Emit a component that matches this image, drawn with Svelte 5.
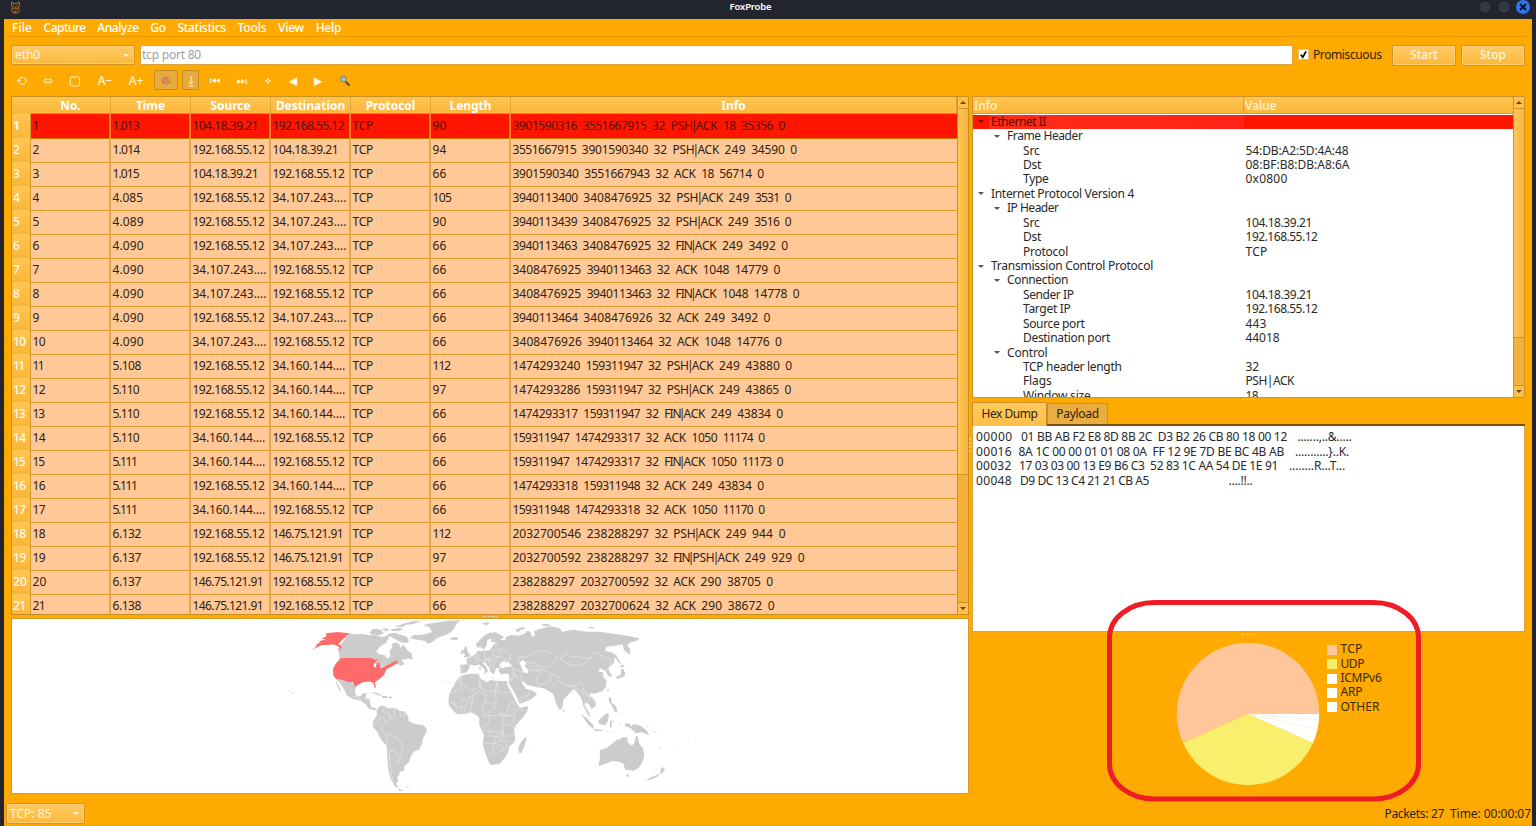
<script>
  const menu = [['File', 20], ['Capture', 42], ['Analyze', 41.5], ['Go', 15.5], ['Statistics', 48.5], ['Tools', 29], ['View', 26], ['Help', 25.5]];
  const heads = ['No.', 'Time', 'Source', 'Destination', 'Protocol', 'Length', 'Info'];
  const L = '192.168.55.12';
  const A = '104.18.39.21';
  const B = '34.107.243....';
  const C = '34.160.144....';
  const D = '146.75.121.91';
  const rows = [
    ['1.013', A, L, '90', '3901590316 3551667915 32 PSH|ACK 18 35356 0'],
    ['1.014', L, A, '94', '3551667915 3901590340 32 PSH|ACK 249 34590 0'],
    ['1.015', A, L, '66', '3901590340 3551667943 32 ACK 18 56714 0'],
    ['4.085', L, B, '105', '3940113400 3408476925 32 PSH|ACK 249 3531 0'],
    ['4.089', L, B, '90', '3940113439 3408476925 32 PSH|ACK 249 3516 0'],
    ['4.090', L, B, '66', '3940113463 3408476925 32 FIN|ACK 249 3492 0'],
    ['4.090', B, L, '66', '3408476925 3940113463 32 ACK 1048 14779 0'],
    ['4.090', B, L, '66', '3408476925 3940113463 32 FIN|ACK 1048 14778 0'],
    ['4.090', L, B, '66', '3940113464 3408476926 32 ACK 249 3492 0'],
    ['4.090', B, L, '66', '3408476926 3940113464 32 ACK 1048 14776 0'],
    ['5.108', L, C, '112', '1474293240 159311947 32 PSH|ACK 249 43880 0'],
    ['5.110', L, C, '97', '1474293286 159311947 32 PSH|ACK 249 43865 0'],
    ['5.110', L, C, '66', '1474293317 159311947 32 FIN|ACK 249 43834 0'],
    ['5.110', C, L, '66', '159311947 1474293317 32 ACK 1050 11174 0'],
    ['5.111', C, L, '66', '159311947 1474293317 32 FIN|ACK 1050 11173 0'],
    ['5.111', L, C, '66', '1474293318 159311948 32 ACK 249 43834 0'],
    ['5.111', C, L, '66', '159311948 1474293318 32 ACK 1050 11170 0'],
    ['6.132', L, D, '112', '2032700546 238288297 32 PSH|ACK 249 944 0'],
    ['6.137', L, D, '97', '2032700592 238288297 32 FIN|PSH|ACK 249 929 0'],
    ['6.137', D, L, '66', '238288297 2032700592 32 ACK 290 38705 0'],
    ['6.138', D, L, '66', '238288297 2032700624 32 ACK 290 38672 0']
  ].map((r, i) => [String(i + 1), r[0], r[1], r[2], 'TCP', r[3], r[4]]);

  const tree = [
    [0, 'Ethernet II', 55], [1, 'Frame Header', 75.5], [2, 'Src', 16.5, '54:DB:A2:5D:4A:48', 103], [2, 'Dst', 18, '08:BF:B8:DB:A8:6A', 104], [2, 'Type', 25.5, '0x0800', 42],
    [0, 'Internet Protocol Version 4', 143], [1, 'IP Header', 51.5], [2, 'Src', 16.5, A, 66.5], [2, 'Dst', 18, L, 72], [2, 'Protocol', 45, 'TCP', 22],
    [0, 'Transmission Control Protocol', 162], [1, 'Connection', 61], [2, 'Sender IP', 50.5, A, 66.5], [2, 'Target IP', 47.5, L, 72],
    [2, 'Source port', 61.5, '443', 21], [2, 'Destination port', 87, '44018', 34], [1, 'Control', 40.5],
    [2, 'TCP header length', 98.5, '32', 13.5], [2, 'Flags', 28.5, 'PSH|ACK', 48.5], [2, 'Window size', 67.5, '18', 12.5]
  ];
  const hex = [
    ['00000', 36.5, 8.5, '01 BB AB F2 E8 8D 8B 2C  D3 B2 26 CB 80 18 00 12', 266, 10.5, '.......,..&.....', 54],
    ['00016', 36, 6.5, '8A 1C 00 00 01 01 08 0A  FF 12 9E 7D BE BC 4B AB', 265.5, 11, '...........}..K.', 54],
    ['00032', 35.5, 7.5, '17 03 03 00 13 E9 B6 C3  52 83 1C AA 54 DE 1E 91', 259, 11, '........R...T...', 56],
    ['00048', 36, 8, 'D9 DC 13 C4 21 21 CB A5', 129, 79.5, '....!!..', 24]
  ];
  const legend = [['TCP', '#ffc799', 22], ['UDP', '#f9ef6c', 23.5], ['ICMPv6', '#fff', 41], ['ARP', '#fff', 22], ['OTHER', '#fff', 39]];

  function spacing(text) {
    let d = text.endsWith('....') ? 2.2 : 0;
    const address = text.includes('.');
    for (const c of text) {
      if (c === '1') d -= address ? 2 : 1.5;
      else if (c === '3' || c === '5') d -= 0.6;
      else if (c >= '0' && c <= '9') d += 0.15;
      else if (c === 'I' || c === 'N') d -= 1.5;
      else if (c >= 'A' && c <= 'Z') d -= 0.25;
    }
    return (d / text.length).toFixed(3);
  }
  function fit(node, width) {
    const natural = node.getBoundingClientRect().width;
    node.style.letterSpacing = `${(width - natural) / node.textContent.length}px`;
  }
</script>

<div class="screen">
  <header class="titlebar">
    <svg class="fox" width="11" height="13" viewBox="0 0 11 13"><path d="M1.5 4V1l2.2 1.5h3.2L9.3 1v3.2L8.4 6.5 5.5 8 2.5 6.5zM2.5 7l-1 2.5L3 12h5l1.5-2.3L8.5 7M3.2 4.2l1.4.8M7.6 4.2l-1.3.8M4.8 6.3h1.5M3.5 9.5l2 1 2-1M5.5 10.5V12" fill="none" stroke="#bd7b26" stroke-width=".9" /></svg>
    <b use:fit={42}>FoxProbe</b>
    <div class="wins"><i></i><i></i><i class="close"><svg width="14" height="14" viewBox="0 0 14 14"><path d="M4 4l6 6M10 4l-6 6" stroke="#10141f" stroke-width="2" /></svg></i></div>
  </header>

  <div class="window">
    <nav>
      {#each menu as [label, w]}<span class="mi" style="width:{w}px"><span use:fit={w}>{label}</span></span>{/each}
    </nav>

    <div class="capture">
      <div class="combo"><span use:fit={25}>eth0</span><i class="down"></i></div>
      <div class="filter"><span use:fit={59}>tcp port 80</span></div>
      <div class="check"><svg width="9" height="9" viewBox="0 0 10 10"><path d="M2 5.2l2.2 2.8L7.8 1.6" fill="none" stroke="#000" stroke-width="1.9" /></svg></div>
      <span class="prom"><span use:fit={68.5}>Promiscuous</span></span>
      <div class="btn">Start</div>
      <div class="btn">Stop</div>
    </div>

    <div class="tools">
      <div style="width:26px"><svg width="12" height="12" viewBox="0 0 12 12"><path d="M1 5.800h3.600M2.800 4l-1.800 1.800M2.800 5.900a3.600 3.600 0 1 1 1.200 2.700M3.300 3.800A3.600 3.600 0 0 1 6.300 2.400M4.500 5.500L2.700 7.300" /></svg></div>
      <div style="width:26px"><svg width="12" height="12" viewBox="0 0 12 12"><path d="M3 4.700h6M3 7.300h6M4.500 3L1.600 6l2.900 3M7.500 3l2.900 3-2.900 3" /></svg></div>
      <div style="width:28px"><svg width="12" height="12" viewBox="0 0 12 12"><rect x="1.300" y="2" width="9.200" height="9" rx="1.500" /></svg></div>
      <div style="width:32px"><span use:fit={14.5}>A−</span></div>
      <div style="width:30px"><span use:fit={14.5}>A+</span></div>
      <div class="on" style="width:24px;margin-left:3px"><svg width="12" height="12" viewBox="0 0 12 12"><path d="M5 1.500C2 1.500.8 4 1.200 6.500 1.700 9.500 4.500 10.800 7.500 10.200c1.200-.3.2-1.800 1-2.600.8-.7 2.500 0 2.200-1.700C10.200 3 8 1.500 5 1.500z" fill="#e0905c" stroke="none" /><circle cx="3.400" cy="4" r=".9" fill="#7f92a8" stroke="none" /><circle cx="6.300" cy="3.200" r="1" fill="#ea5a3a" stroke="none" /><circle cx="3.300" cy="7" r="1" fill="#e0503f" stroke="none" /><circle cx="6" cy="8.700" r=".8" fill="#6aa0c0" stroke="none" /><path d="M7 5.500l3 3.200" stroke="#b86a48" /></svg></div>
      <div class="on" style="width:17px;margin-left:4px"><svg width="10" height="12" viewBox="0 0 10 12"><path d="M5 1v8M2.700 6.700L5 9l2.300-2.300M2.500 11h5" /></svg></div>
      <div style="width:24px;margin-left:4px"><svg class="solid" width="12" height="12" viewBox="0 0 12 12"><path d="M1 3h1.200v5H1zM6.800 3v5L2.600 5.500zM11 3v5L6.800 5.500z" /></svg></div>
      <div style="width:30px"><svg class="solid" width="12" height="12" viewBox="0 0 12 12"><path d="M1 4v5l4.200-2.500zM5.200 4v5l4.200-2.500zM9.600 4h1.200v5H9.600z" /></svg></div>
      <div style="width:21px"><svg width="10" height="12" viewBox="0 0 10 12"><circle cx="5" cy="6" r="1.500" /><path d="M5 3v2M5 7v2M2 6h2M6 6h2" /></svg></div>
      <div style="width:24px;margin-left:3px"><svg class="solid" width="10" height="12" viewBox="0 0 10 12"><path d="M9.200 2.300v9L.6 6.800z" /></svg></div>
      <div style="width:26px"><svg class="solid" width="10" height="12" viewBox="0 0 10 12"><path d="M.8 2.300v9l8.600-4.500z" /></svg></div>
      <div style="width:24px;margin-left:2px"><svg width="12" height="12" viewBox="0 0 12 12"><path d="M6.600 6.600l4 4" stroke="#454a50" stroke-width="2" /><circle cx="4.400" cy="4.200" r="2.900" fill="#94c3c7" stroke="#827f62" stroke-width="1" /></svg></div>
    </div>

    <main>
      <section class="left">
        <div class="packets">
          <div class="grid">
            <div class="row head"><span class="rh"></span>{#each heads as h}<b>{h}</b>{/each}</div>
            {#each rows as r, i}
              <div class="row" class:sel={i === 0}>
                <span class="rh" class:bold={i === 0}><span style="letter-spacing:{spacing(r[0])}px">{r[0]}</span></span>
                {#each r as c}<span class="cell">{#each c.split(' ') as word}<span class="word">{#each word.split('|') as part, k}{#if k > 0}<i class="bar">|</i>{/if}<span style="letter-spacing:{spacing(part)}px">{part}</span>{/each}</span>{/each}</span>{/each}
              </div>
            {/each}
          </div>
          <div class="scroll"><i class="up"></i><div class="thumb" style="height:367px"></div><div class="track"></div><i class="dn"></i></div>
        </div>
        <div class="hsplit"><i></i></div>
        <div class="map">
          <svg width="955" height="174" viewBox="0 0 955 174">
            <g class="land" transform="translate(268 -4) scale(.33333)">
              <path d="M207 55l20 3 18-2 22 5 25 0 14 6 16-4 4 8-9 13-19 12-9 14 8 8 17 3 10 11 7-10-2-14 9-13-4-7 13-6 11 5 3 12 9-10 13 17 13 10 0 9-16 7-20 3 9 6 6 6-15 6-3-5-18 1-20 11-7-6-12 3-13-9-8-6H186l-7-8-2-19-4-13z" />
              <path d="M352 76l-20-11-16 2 11-11 15-3 14 5 22 6 9 12-4 7-13 0-11-3zM268 55l10-13 15 0 12 4 6 8-10 6-22-1zM305 43l13-3 11 4-8 5zM333 43l22-4 17 3-15 6-22 0zM342 35l29-9 25-7 29-2-22 9-26 4-10 6zM384 124l10 2 7 6-14 1zM356 134l13 2-8 6-8-1z" />
              <path d="M389 70L400 60 430 59 456 51 448 37 430 30 455 25 500 18 540 16 529 28 522 42 510 54 490 62 472 68 456 82 444 86 434 78zM512 68l15-2 10 4-8 5-17-1z" />
              <path d="M556 94l5 3-2 8 8 12 4 4-6 4-14 2 5-6-5-8zM546 106l7 0-3 9-8 1z" />
              <path d="M168 192L188 196 205 202 216 200 228 216 224 230 229 243 241 244 249 235 260 235 255 250 269 253 270 265 275 278 284 278 290 284 282 286 267 281 257 268 240 256 220 253 200 241 194 226 182 206zM167 194l9 19 7 15-3 1-9-16zM271 230l19 3 15 8-4 2-20-8zM306 242l15 1 3 5-14 2-4-3z" />
              <path d="M290 284L300 274 312 272 323 280 346 280 361 288 374 289 385 306 386 319 402 326 430 331 440 341 439 353 428 371 427 385 418 403 401 410 392 425 388 440 378 450 372 454 374 466 360 470 358 480 352 486 354 498 348 506 356 518 346 516 334 496 326 472 323 442 320 392 306 378 288 346 277 332 280 317 290 303z" />
              <path d="M356 520l14 7-13 0zM379 514l10 1-7 3z" />
              <path d="M277 332l21-20 12-2 12 9 -18 14 5 16 13 12 7-3 18 7 18 19 4 16-8 20-3 20-13 4M316 275l-9 14 9 7 13 0 3 15-9 6M346 280l-5 9 5 16-14 4M360 288l0 16 12-1M373 289l0 14M322 361l-2 31M331 407l13 2 9 13M327 407l2 27 4 38 9 38M219 245l14-1 13 15" class="border" />
            </g>
            <g class="usa" transform="translate(268 -4) scale(.33333)">
              <path d="M139 55l33-4 36 4-33 32 10 8-2 10-6-10-18-7-12 2-20 0-29 13 12-10-2-4 11-6-1-4 19-6-14-3 15-5z" />
              <path d="M183 129H275L283 134 295 133 283 144 280 154 286 158 291 145 298 141 300 156 304 159 322 151 350 136 353 143 336 154 319 163 312 180 302 188 294 196 284 202 288 216 284 219 280 204 272 200 262 200 248 202 236 208 226 217 218 200 205 202 188 196 168 191 160 182 159 162 166 148 178 134z" />
              <path d="M35 233l5 1-1 3zM27 226l4 2-2 1zM329 246h5v3h-5zM97 104l6-2-3 3z" />
            </g>
            <g class="land" transform="translate(428 -4) scale(.33333)">
              <path d="M66 181L92 176 116 176 120 190 134 197 142 202 150 195 175 198 200 198 203 212 218 240 232 268 240 278 265 273 262 288 248 308 228 330 222 345 226 372 220 385 208 394 204 412 192 432 178 447 152 450 146 440 136 415 128 388 132 360 118 330 118 308 104 296 90 292 75 297 52 298 40 288 28 272 25 262 28 235 40 215 50 195z" />
              <path d="M112 98L108 88 118 76 132 62 148 53 165 52 178 58 192 66 180 74 195 76 198 66 215 60 235 62 255 56 262 48 272 50 275 64 285 64 282 48 300 42 330 34 360 40 365 50 400 44 440 50 480 50 530 58 570 64 598 70 590 78 572 82 562 90 571 105 570 120 552 105 548 88 525 92 498 96 496 108 515 112 524 125 522 145 505 160 508 172 518 182 508 186 496 168 480 160 476 170 490 172 488 182 500 198 498 215 488 228 465 236 452 234 450 242 466 258 468 272 455 282 446 268 436 262 434 272 446 290 452 308 444 300 430 272 424 250 415 236 402 222 388 235 370 255 368 275 360 286 350 270 340 238 325 228 312 220 290 217 262 210 248 198 246 204 258 222 275 225 292 236 275 252 248 264 238 266 226 238 207 205 207 178 196 176 182 178 176 168 180 160 168 160 162 178 152 172 148 158 134 142 128 144 140 158 144 168 138 176 132 162 118 148 104 152 90 148 88 160 80 172 62 176 60 150 82 148 78 132 92 126 108 116 112 108 124 108 150 106 158 94 162 88 176 84 154 82 152 70 142 76 140 90 132 104 122 96z" />
              <path d="M236 395l7-13 13-15 4 4-8 25-8 18-8-1zM368 281l6 6-3 6zM422 297l18 12 20 22 2 10-16-10zM460 341l17 3 16 3-10 2-19-2zM474 319l12-12 15-14 6 5-4 23-8 10-16-3zM510 318l12-2-8 7 2 12-6 4zM555 324l14 2 4 8 9-7 21 6 16 13 9 15-15-6-9-3-16 3-17-16-15-5zM507 245l6 3 2 15 13 11 5 19-9-3-10-21-8-11zM501 224l6-2-2 9z" />
              <path d="M475 451L480 432 479 405 500 399 516 386 530 374 542 372 548 366 564 368 562 381 576 392 584 382 588 363 593 364 598 386 610 402 613 420 609 438 596 458 582 467 556 464 550 446 536 440 518 438 502 444 480 452zM560 478l9 2-5 7-6-4zM666 455l10 10-10 9-3 4-3-6zM619 494l23-11 19-7-9 9-22 11zM518 114l10 6 16 26-5-1-18-22zM543 148l10 5-2 4-10-2zM528 186l14-7 2-19 5 1 7 14-4 10-21 7zM75 93l7 6-2 6 8 12 3 6-6 4-14 0 5-6-5-8zM65 106l6 0-3 10-7 0z" />
              <path d="M118 150l3 8M128 174l8 3M229 43l18-6 11 3-17 6-5 6-8-3zM304 28l20-2 9 6-22 2zM124 26l16-4 10 2-11 7zM130 172l8 4-5 2zM445 36l17 0 0 4-16 0zM118 154l4 0 0 12-4 0z" />
              <path d="M616 330l12 9M636 346l15 8M655 393l10 12M708 387l4 2M744 370l4 2M284 397l3 1M14 200l5 1M25 202l6 2M156 190l8 0M520 286l4-6M528 348l-8 3M498 350l8 0M540 322l2 8" class="islands" />
              <path d="M238 142L250 135 259 146 254 152 265 165 263 175 250 172 244 156zM178 156L181 144 190 138 198 142 206 140 210 146 218 154 200 156 186 160z" class="water" />
              <path d="M181 99l17 10 14 12-3 15-18 3M233 142l4-17 24 2 17-15 31-4 21 4 22 18-10 12-14 14-28 0-20-14-14 3-9-7M360 129l18-12 18 9 20-3 20 8 19-5M455 126l-11 13-24 13-28-2-28-14-4-7M455 126l2-14 14 2 24 13 17 7-2 22-13 12M232 190l-12-17-1-15M245 170l21-6 27 5 10 5M269 150l22 14 29 3 9 14 5-3 19 5 5 16 24 13 25 0 11-8 11 4 0 15 8 14M240 180l6 18M292 180l-2 22 12 17M335 184l-12 19-22 6M353 197l-15 18M377 208l15 9 12-2M403 212l0 19M404 229l11-10M419 225l13 16M435 237l10 4 5 14-10 10M444 238l14 10 5 18M112 113l4 20 14 5 12-9 16 5 17-7M133 113l1 19 8 5M158 103l3 18-16 12M101 120l11 16-9 10M130 138l15-4 16 8 12-4M145 137l3 12M157 73l5 13M148 152l12 4 4-12M160 122l22 4 18 10M160 104l18 2 4 16M66 152l-2 22M84 149l12 2M217 172l-1 20-9 2M220 171l17 20M217 192l-7 11M244 262l-6-12 26-8 8-16M218 160l14 6 12 4" class="border" />
              <path d="M60 184l-9 16-17 8M62 180l0 43-32 12M62 203l33 27 25-17-3-22M120 200l3 21 15 8 27-1 7-32M172 200l1 33h45M138 229l-3 28-9 25 6 16M98 240l22-11 15 13M98 240l-15 18-4 18-29 0-10-9M64 252l17 5M52 276l-1 21M65 274l0 22M75 276l0 22M98 242l-3 27-6 22M166 231l3 32-8 15 15 15 24 8 4-25 11-17M132 264l32-1M133 300l18-11 11-9M128 305l21-3-4 23-16 15M150 302l37-2 0 27 0 22-14 6-19-7-6 2M187 300l16 3 16-2M190 326l23 6 12 9M132 346l14 1 3 15 16 3 1 20h-35M166 365l17-1 6-14M190 348l0 17-13 14-12 9M195 364l16-2 11-7M160 386l-2 30-14-1M158 407l21-20 11 17-21 13M180 378l15 0 6 15-10 11M208 276l18 10-5 22 0 17M215 258l12 19 23 12M28 262h14l4 10" class="border" />
            </g>
          </svg>
        </div>
      </section>
      <div class="vsplit"><i></i></div>
      <section class="right">
        <div class="tree">
          <div class="tbody">
            <div class="thead"><span>Info</span><span>Value</span></div>
            {#each tree as [level, label, w, value, vw], i}
              <div class="trow" class:sel={i === 0}>
                <div class="tname" style="padding-left:{level * 16 + 2}px">
                  <i class="arrow" class:none={level === 2}></i><span use:fit={w}>{label}</span>
                </div>
                <div class="tval">{#if value}<span use:fit={vw}>{value}</span>{/if}</div>
              </div>
            {/each}
          </div>
          <div class="scroll"><i class="up"></i><div class="thumb" style="height:230px"></div><div class="track"></div><i class="dn"></i></div>
        </div>
        <div class="tabs"><div class="tab active"><span use:fit={56}>Hex Dump</span></div><div class="tab"><span use:fit={42.5}>Payload</span></div><div class="grip"></div></div>
        <div class="hex">
          {#each hex as [off, ow, g1, bytes, bw, g2, txt, tw]}
            <div class="hrow"><span use:fit={ow}>{off}</span><span style="margin-left:{g1}px" use:fit={bw}>{bytes}</span><span style="margin-left:{g2}px" use:fit={tw}>{txt}</span></div>
          {/each}
        </div>
        <div class="chart">
          <div class="grip"></div>
          <svg class="pie" width="144" height="144" viewBox="-72 -72 144 144">
            <path d="M0 0H71.200A71.200 71.200 0 1 0 -65 29z" fill="#ffc799" />
            <path d="M0 0L-65 29A71.200 71.200 0 0 0 65 29z" fill="#f9ef6c" />
            <path d="M0 0L65 29A71.200 71.200 0 0 0 71.200 0z" fill="#fff" />
            <path d="M0 0L71 6M0 0L69.500 15" stroke="#ffe9c6" stroke-width=".8" stroke-dasharray="4 2" />
          </svg>
          <div class="legend">
            {#each legend as [name, color, w]}<div><i style="background:{color}"></i><span use:fit={w}>{name}</span></div>{/each}
          </div>
          <svg class="mark" width="314" height="202" viewBox="0 0 314 202"><rect x="2.500" y="2.500" width="309" height="196.500" rx="45" ry="35" fill="none" stroke="#ee1c25" stroke-width="5" /></svg>
        </div>
      </section>
    </main>

    <footer>
      <div class="combo small"><span use:fit={41.5}>TCP: 85</span><i class="down"></i></div>
      <div class="stat"><span use:fit={59.5}>Packets: 27</span><span use:fit={81}>Time: 00:00:07</span></div>
    </footer>
  </div>
</div>

<style>
  :global(body) { background: #fff; overflow: hidden; }
  .screen, .screen :global(*) { box-sizing: border-box; }
  .screen { width: 1536px; height: 826px; background: #22242e; font: 12px/14px "Noto Sans", sans-serif; color: #2e2410; overflow: hidden; display: flex; flex-direction: column; }
  span, b { flex: none; white-space: pre; }
  i { font-style: normal; }
  .titlebar { height: 19px; flex: none; display: grid; grid-template-columns: 1fr auto 1fr; align-items: start; color: #fff; font-size: 9.5px; padding-right: 6px; padding-left: 10px; }
  .titlebar b { line-height: 14px; margin-left: -38px; margin-right: 1px; font-weight: 600; }
  .fox { margin-top: 1px; }
  .wins { display: flex; justify-content: flex-end; gap: 5px; }
  .wins i { width: 14px; height: 14px; border-radius: 50%; background: #343844; border: 1px solid #171920; }
  .wins .close { background: #2b76f6; border: 0; }
  .wins svg { display: block; }
  .window { flex: 1; margin: 0 4px; background: #fa0; display: flex; flex-direction: column; min-height: 0; border-bottom: 1px solid #eda006; }
  nav { height: 18px; flex: none; border-bottom: 1px solid #eb9c00; display: flex; gap: 11.6px; padding-left: 8px; align-items: center; color: #fff; font-weight: 500; }
  .mi { display: block; }
  .capture { height: 20px; flex: none; margin: 8px 7px 0; display: flex; align-items: center; }
  .combo, .btn { background: linear-gradient(#ffca66, #fbb93c); border: 1px solid #d2952a; border-radius: 2px; color: #fff5df; box-shadow: inset 0 0 0 1px #ffce76; }
  .combo { width: 124px; height: 20px; display: flex; align-items: center; justify-content: space-between; padding: 0 5px 0 3px; margin-right: 5px; }
  .down { border: 3px solid transparent; border-top-color: #fff0cf; border-bottom: 0; }
  .filter { width: 1153px; height: 20px; background: #fff; border: 1px solid #d9a343; border-radius: 2px; color: #a0a0a0; padding: 2px 1px; margin-right: 5px; display: flex; }
  .check { width: 11px; height: 11px; background: #fff; border: 1px solid #e0c188; margin: 0 4px 1px 0; display: flex; }
  .prom { width: 79px; }
  .btn { width: 64px; height: 21px; text-align: center; line-height: 18px; font-weight: 500; }
  .btn + .btn { margin-left: 5px; }
  .tools { height: 20px; flex: none; margin: 5px 5px 6px; display: flex; color: #fff3d8; font-weight: 500; }
  .tools div { display: flex; align-items: center; justify-content: center; flex: none; padding-top: 1px; }
  .tools svg { fill: none; stroke: #fff3d8; stroke-width: 1; }
  .tools svg.solid { fill: #fff7e5; stroke: none; }
  .tools .on { background: #e5ab3b; border: 1px solid #c18a2a; border-radius: 2px; }
  main { flex: none; height: 698px; margin: 0 7px; display: flex; }
  .left { width: 958px; flex: none; display: flex; flex-direction: column; }
  .packets { height: 519px; display: flex; border: 1px solid #c88e1f; overflow: hidden; }
  .grid { width: 945px; overflow: hidden; }
  .row { display: grid; grid-template-columns: 19px repeat(6, 80px) 446px; height: 24px; background: #ffc896; }
  .row.head { height: 17px; color: #fff; background: linear-gradient(#ffc552, #fab63a); border-bottom: 1px solid #d49722; }
  .head b { text-align: center; line-height: 17px; border-right: 1px solid #dba335; font-weight: 700; font-size: 11.9px; }
  .rh { background: linear-gradient(#ffc552, #fab63a); color: #fffaf0; font-weight: 500; line-height: 24px; padding-left: 1px; border-right: 1px solid #d49a2c; border-bottom: 1px solid #d59c2c; }
  .rh.bold { font-weight: 700; }
  .head .rh { border: 0; }
  .cell { line-height: 23px; padding-left: 1.5px; border-right: 2px solid #e3a845; border-bottom: 1px solid #d99c2c; overflow: hidden; display: flex; gap: 5.5px; }
  .cell:last-child { border-right: 0; }
  .word { display: flex; }
  .bar { margin: 0 -1.8px; }
  .row.sel { background: #ff1500; color: #541200; }
  .row.sel .cell { border-bottom-color: #c87200; border-right-color: #e08522; }
  .scroll { width: 11px; flex: none; background: #f5b03a; border-left: 1px solid #cf9228; display: flex; flex-direction: column; }
  .scroll i { height: 11px; flex: none; background: #ffc04b; display: grid; place-items: center; }
  .scroll i::after { content: ''; border: 3px solid transparent; }
  .scroll .up::after { border-bottom-color: #63491b; border-top: 0; }
  .scroll .dn::after { border-top-color: #63491b; border-bottom: 0; }
  .thumb { flex: none; background: linear-gradient(90deg, #ffc755, #f7b53d); border-top: 1px solid #cf9228; border-bottom: 1px solid #cf9228; }
  .track { flex: 1; border-bottom: 1px solid #cf9228; }
  .hsplit { height: 3px; display: flex; justify-content: center; align-items: center; }
  .hsplit i, .grip { width: 14px; height: 1px; border-top: 1px dotted #ffdfa0; }
  .map { height: 176px; background: #fff; border: 1px solid #d49a2f; overflow: hidden; }
  .map svg { display: block; }
  .land path { fill: #ccc; }
  .land .border { fill: none; stroke: #ececec; stroke-width: 1.8; }
  .land .islands { fill: none; stroke: #d8d8d8; stroke-width: 2; }
  .land .water { fill: #fff; }
  .usa path { fill: #ff6b6b; }
  .vsplit { width: 3px; display: flex; align-items: center; padding-bottom: 1px; }
  .vsplit i { height: 14px; border-left: 2px dotted #ffc95f; }
  .right { width: 553px; flex: none; display: flex; flex-direction: column; }
  .tree { height: 302px; background: #fff; border: 1px solid #d0952a; display: flex; overflow: hidden; }
  .tbody { width: 540px; overflow: hidden; }
  .thead { display: grid; grid-template-columns: 271px 1fr; height: 17px; margin-bottom: .6px; background: linear-gradient(#ffc552, #fab63a); border-bottom: 1px solid #dca02e; color: #fff5df; line-height: 17px; font-weight: 500; }
  .thead span { padding-left: 1px; border-right: 1px solid #dba335; }
  .thead span:last-child { border: 0; }
  .trow { display: grid; grid-template-columns: 271px 1fr; height: 14.43px; align-items: center; color: #292929; }
  .tname { display: flex; align-items: center; height: 100%; line-height: 14px; }
  .tval { padding-left: 1.5px; display: flex; }
  .trow.sel { background: #ff1500; color: #5b0a00; }
  .trow.sel .tname { background: linear-gradient(90deg, transparent 16px, #ff2c18 16px, #ff2415); }
  .arrow { width: 6px; border: 3px solid transparent; border-top-color: #555; border-bottom: 0; margin: 0 7px 0 3px; flex: none; }
  .sel .arrow { border-top-color: #6b1508; }
  .arrow.none { border-color: transparent; }
  .tabs { height: 28px; flex: none; display: flex; align-items: flex-end; position: relative; border-bottom: 2px solid #765016; }
  .tabs .grip { position: absolute; left: 270px; top: 1px; }
  .tab { height: 21px; width: 61px; line-height: 20px; text-align: center; background: #e9ad40; border: 1px solid #c68f2b; border-bottom: 0; }
  .tab.active { height: 24px; width: 75px; line-height: 21px; background: linear-gradient(#ffc95e, #ffbf4a); margin-bottom: -2px; }
  .hex { height: 206px; flex: none; background: #fff; border: 1px solid #d9a34a; border-top: 0; padding: 4.4px 0 0 3px; color: #292929; }
  .hrow { display: flex; height: 14.43px; }
  .chart { flex: 1; position: relative; display: flex; padding-left: 204px; padding-top: 10px; }
  .chart .grip { position: absolute; left: 270px; top: 2px; }
  .pie { flex: none; }
  .legend { margin: 0 0 0 7px; }
  .legend div { display: flex; align-items: center; height: 14.43px; gap: 3.5px; color: #3a2a05; }
  .legend i { width: 10px; height: 10px; margin-top: 1px; }
  .mark { position: absolute; left: 135px; top: -32px; }
  footer { flex: 1; display: flex; justify-content: space-between; align-items: center; padding: 8px 1px 0 2px; }
  .combo.small { width: 79px; height: 21px; }
  .stat { display: flex; gap: 6px; padding-top: 1px; }
</style>
